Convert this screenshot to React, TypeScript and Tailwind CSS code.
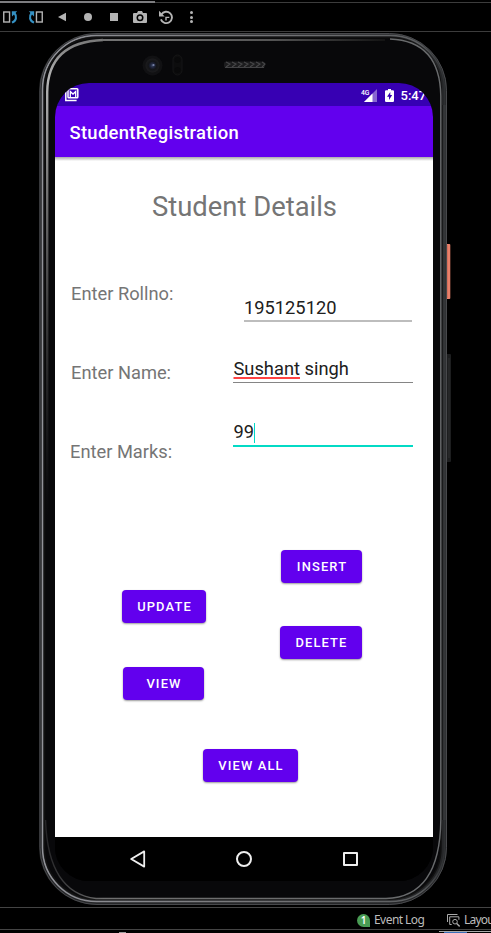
import React from "react";

function RotateIcon({ flip = false }: { flip?: boolean }) {
  return (
    <svg width="15" height="14" viewBox="0 0 15 14" className={flip ? "-scale-x-100" : ""} fill="none">
      <rect x="0.75" y="2" width="5.8" height="10" stroke="#b4b4b4" strokeWidth="1.4" />
      <path d="M9 12.6C13.4 10.8 14.2 6.4 11.4 3" stroke="#3592c4" strokeWidth="2.1" />
      <path d="M8.8 1.2h5.4L9 6.6z" fill="#3592c4" />
    </svg>
  );
}

function Toolbar() {
  return (
    <div className="h-8 shrink-0 border-b border-[#3c3c3c] pt-px">
      <div className="flex h-0.5 items-end">
        <div className="h-0.5 w-[155px] bg-[#7d7d80]" />
        <div className="h-px flex-1 bg-[#3c3c3c]" />
      </div>
      <div className="flex h-7 items-center pl-[3px] text-[#b4b4b4]">
        <RotateIcon />
        <div className="ml-[10px]"><RotateIcon flip /></div>
        <svg className="ml-[15px]" width="8" height="10" viewBox="0 0 8 10"><path d="M0 5 8 .8v8.4z" fill="currentColor" /></svg>
        <div className="ml-[18px] size-2 rounded-full bg-[#b4b4b4]" />
        <div className="ml-[18px] size-2 bg-[#b4b4b4]" />
        <svg className="ml-[15px]" width="14" height="12" viewBox="0 0 14 12">
          <path d="M1 2h3l1-2h4l1 2h3a1 1 0 0 1 1 1v8a1 1 0 0 1-1 1H1a1 1 0 0 1-1-1V3a1 1 0 0 1 1-1z" fill="currentColor" />
          <circle cx="7" cy="6.8" r="3.5" fill="#000" />
          <circle cx="7" cy="6.8" r="2" fill="currentColor" />
        </svg>
        <svg className="ml-[12px]" width="14" height="15" viewBox="0 0 14 15" fill="none" stroke="currentColor" strokeWidth="1.9">
          <path d="M2.4 4.4A5.7 5.7 0 1 1 1.9 9.4" />
          <path d="M0 .8v5.7h5.7z" fill="currentColor" stroke="none" />
          <path d="M10.3 7.4H7v3.2" strokeWidth="1.4" />
        </svg>
        <div className="ml-[17px] flex flex-col gap-[1.5px]">
          <div className="size-[3px] rounded-full bg-[#b4b4b4]" />
          <div className="size-[3px] rounded-full bg-[#b4b4b4]" />
          <div className="size-[3px] rounded-full bg-[#b4b4b4]" />
        </div>
      </div>
    </div>
  );
}

function PhoneBody() {
  return (
    <svg className="absolute inset-0" width="491" height="875" viewBox="0 32 491 875" fill="none">
      <defs>
        <linearGradient id="rim" x1="0" y1="0" x2="1" y2="0">
          <stop offset="0" stopColor="#929399" />
          <stop offset="0.5" stopColor="#77777a" />
          <stop offset="0.94" stopColor="#5b5d5f" />
          <stop offset="1" stopColor="#2d2f31" />
        </linearGradient>
        <linearGradient id="inner" x1="44" y1="0" x2="441" y2="0" gradientUnits="userSpaceOnUse">
          <stop offset="0" stopColor="#232325" />
          <stop offset="0.15" stopColor="#707070" />
          <stop offset="1" stopColor="#686a6c" />
        </linearGradient>
        <linearGradient id="shine" x1="0" y1="40" x2="0" y2="520" gradientUnits="userSpaceOnUse">
          <stop offset="0" stopColor="#7a7a7a" />
          <stop offset="0.08" stopColor="#b5b5b5" />
          <stop offset="0.3" stopColor="#777" />
          <stop offset="1" stopColor="#333" stopOpacity="0" />
        </linearGradient>
        <linearGradient id="topline" x1="90" y1="0" x2="390" y2="0" gradientUnits="userSpaceOnUse">
          <stop offset="0" stopColor="#777" />
          <stop offset="0.6" stopColor="#555" />
          <stop offset="1" stopColor="#111" />
        </linearGradient>
        <radialGradient id="lens">
          <stop offset="0" stopColor="#3d4866" />
          <stop offset="0.35" stopColor="#1c2136" />
          <stop offset="0.6" stopColor="#131417" />
          <stop offset="1" stopColor="#1c1c1e" />
        </radialGradient>
      </defs>
      <rect x="446" y="244" width="4.3" height="55" rx="1" fill="#e8806a" />
      <path d="M447 245v53" stroke="#c4614f" />
      <rect x="446" y="354" width="5" height="108" rx="1" fill="#1d1e1f" />
      <path d="M449 358v100" stroke="#303132" />
      <rect x="39" y="33" width="408" height="872" rx="58" fill="#252628" />
      <rect x="40" y="33.5" width="406.5" height="871" rx="57" stroke="#48494c" />
      <rect x="42.5" y="35.5" width="402" height="866" rx="54" stroke="url(#rim)" strokeWidth="1.5" />
      <rect x="44.5" y="37.5" width="396.5" height="861.5" rx="51" fill="#08080a" stroke="#111" strokeWidth="1.5" />
      <path d="M390 39Q440 41 440.8 96V820Q440 897 386 898.5H96Q48 893 45.5 820" stroke="url(#inner)" strokeWidth="1.4" />
      <path d="M47.2 520V92Q48 42 103 40" stroke="url(#shine)" strokeWidth="2.4" />
      <path d="M102 40H385" stroke="url(#topline)" strokeWidth="2.2" />
      <path d="M442.5 105v715" stroke="#191a1b" />
      <path d="M444.5 105v715" stroke="#343638" strokeWidth="2.5" />
      <circle cx="152.5" cy="65.5" r="10" fill="#111113" />
      <circle cx="152.5" cy="65.5" r="7" fill="url(#lens)" />
      <circle cx="153.5" cy="65" r="1.1" fill="#7884a8" />
      <rect x="173" y="55" width="9" height="20" rx="4.5" fill="#0d0d0e" stroke="#151516" />
      <circle cx="177.5" cy="60" r="3" fill="#09090a" />
      <circle cx="177.5" cy="70" r="3" fill="#09090a" />
      <rect x="224" y="61.5" width="41" height="6.5" rx="2" fill="#1c1c1e" />
      <path d="m226 62 4 2-4 3m6-5 4 2-4 3m6-5 4 2-4 3m6-5 4 2-4 3m6-5 4 2-4 3m6-5 4 2-4 3m6-5 3 2-3 3" stroke="#474749" strokeWidth="1.1" />
      <path d="M225 67.5h39" stroke="#434345" />
    </svg>
  );
}

function StatusBar() {
  return (
    <div className="flex h-[23px] shrink-0 items-center bg-[#3700b3] pt-px pl-[10px] text-white">
      <svg className="shrink-0" width="14" height="14" viewBox="0 0 14 14" fill="none" stroke="white">
        <path d="M.8 3v9.4h10.8" strokeWidth="1.5" />
        <rect x="3" y=".8" width="9.8" height="9" rx=".8" strokeWidth="1.5" />
        <path d="M5.3 9V3.5L8 6l2.7-2.5V9" strokeWidth="1.3" />
      </svg>
      <div className="ml-[282px] flex shrink-0 items-center">
        <svg width="17" height="15" viewBox="0 0 17 15" fill="white">
          <path d="M16 1v13H3z" fillOpacity=".4" />
          <path d="M11.5 5.5V14H3z" />
          <rect x="0" y="0" width="9" height="7" fill="#3700b3" />
          <text x="0" y="6.8" fontSize="8" fontFamily="Roboto" fontWeight="500" textLength="8.5" lengthAdjust="spacingAndGlyphs">4G</text>
        </svg>
        <svg className="ml-[7px]" width="9" height="13" viewBox="0 0 9 13">
          <path d="M3 0h3v1.3h2.2L9 2v10.2l-.8.8H.8l-.8-.8V2l.8-.7H3z" fill="white" />
          <path d="M5.3 2.9 2 7.7h2v3.2L7.2 6H5.3z" fill="#3700b3" />
        </svg>
        <span className="ml-[6.5px] text-[13px] leading-none font-medium whitespace-nowrap">5:47</span>
      </div>
    </div>
  );
}

function ActionButton({ label, className = "" }: { label: string; className?: string }) {
  return (
    <button className={"h-[33px] rounded-[4px] bg-[#6200ee] pt-px pl-px text-[12.9px] font-medium tracking-[1.15px] text-white shadow-[0_1px_2px_rgba(0,0,0,0.4)] " + className}>
      {label}
    </button>
  );
}

function RegistrationForm() {
  return (
    <main className="flex h-[680px] flex-col bg-white">
      <div className="mb-[30px] h-1 shrink-0 bg-linear-to-b from-[#aaa] to-white" />
      <h1 className="h-8 shrink-0 pl-px text-center text-[27.4px] leading-8 text-[#757575]">Student Details</h1>
      <div className="mt-[58px] flex h-[269px] shrink-0">
        <div className="flex w-[178px] flex-col pt-px pl-4 text-[18.3px] leading-6 text-[#757575]">
          <label>Enter Rollno:</label>
          <label className="mt-[55px]">Enter Name:</label>
          <label className="mt-[55px] -ml-px">Enter Marks:</label>
        </div>
        <div className="flex w-[180px] flex-col pt-[15px] text-[18.3px] leading-6 text-[#202020]">
          <div className="ml-[11px] w-[168px] border-b-2 border-[#bdbdbd]">195125120</div>
          <div className="mt-[35px] h-[26px] border-b border-[#858585] pl-[0.5px]">
            <span className="underline decoration-[#ff4343] decoration-2 underline-offset-[2px] [text-decoration-skip-ink:none]">Sushant</span> singh
          </div>
          <div className="mt-[37px] flex h-[27px] border-b-2 border-[#03dac5] pl-[0.5px]">
            <span>99</span><span className="mt-[3px] h-5 w-px bg-[#03dac5]" />
          </div>
        </div>
      </div>
      <div className="flex h-[199px] shrink-0">
        <div className="flex w-[225px] flex-col items-start gap-[44px] pt-10 pl-[67px]">
          <ActionButton label="UPDATE" className="w-[84px]" />
          <ActionButton label="VIEW" className="ml-px w-[81px]" />
        </div>
        <div className="flex w-[82px] flex-col items-end gap-[43px]">
          <ActionButton label="INSERT" className="w-[81px]" />
          <ActionButton label="DELETE" className="w-[82px]" />
        </div>
      </div>
      <ActionButton label="VIEW ALL" className="ml-[148px] w-[95px] shrink-0" />
    </main>
  );
}

function NavBar() {
  return (
    <nav className="flex h-11 items-center bg-black pl-[75px]">
      <svg width="16" height="18" viewBox="0 0 16 18" fill="none" stroke="#eee" strokeWidth="1.8" strokeLinejoin="round"><path d="M14.2 1.4v15.2L1.2 9z" /></svg>
      <div className="ml-[90px] size-4 rounded-full border-2 border-[#eee]" />
      <div className="ml-[91px] h-[14px] w-[15px] rounded-[1px] border-2 border-[#eee]" />
    </nav>
  );
}

function Footer() {
  return (
    <footer className="flex h-[26px] shrink-0 flex-col overflow-hidden border-t border-[#444]">
      <div className="flex h-[21px] shrink-0 items-center pt-[3px] pl-[357px] font-['Noto_Sans','Open_Sans',sans-serif] text-[12px] text-[#bcbcbc]">
        <div className="flex size-[13px] shrink-0 items-center justify-center rounded-full rounded-br-none bg-[#499c54] text-[10px] font-semibold text-white">1</div>
        <span className="ml-1 w-[50px] shrink-0 whitespace-nowrap tracking-[-0.55px]">Event Log</span>
        <svg className="ml-[23px] shrink-0" width="13" height="13" viewBox="0 0 13 13" fill="none" stroke="#aaa">
          <path d="M.5 8V.5h10M2.7 10.5V2.8h9.2v3M2.7 10.5h2" />
          <circle cx="8" cy="7.7" r="2.3" />
          <path d="m9.7 9.4 3 3" strokeWidth="1.4" />
        </svg>
        <span className="ml-1 shrink-0 whitespace-nowrap tracking-[-0.8px]">Layou</span>
      </div>
      <div className="flex h-1 shrink-0 items-end border-t border-[#444]">
        <div className="ml-[119px] h-px w-[7px] shrink-0 bg-[#999]" />
        <div className="ml-[313px] flex h-[2px] w-[52px] shrink-0 border-t border-[#aaa]">
          <div className="ml-[5px] h-px w-[23px] bg-[#3b6fb9]" />
        </div>
      </div>
    </footer>
  );
}

export default function App() {
  return (
    <div className="flex h-[933px] w-[491px] flex-col overflow-hidden bg-black font-[Roboto,sans-serif]">
      <Toolbar />
      <div className="relative h-[875px] shrink-0 pt-[51px] pl-[55px]">
        <PhoneBody />
        <div className="relative h-[798px] w-[378px] overflow-hidden rounded-[34px] bg-black">
          <StatusBar />
          <header className="flex h-[51px] items-center bg-[#6200ee] pt-[2px] pl-[14.5px] text-[18.4px] font-medium tracking-[0.3px] text-white">StudentRegistration</header>
          <RegistrationForm />
          <NavBar />
        </div>
      </div>
      <Footer />
    </div>
  );
}
